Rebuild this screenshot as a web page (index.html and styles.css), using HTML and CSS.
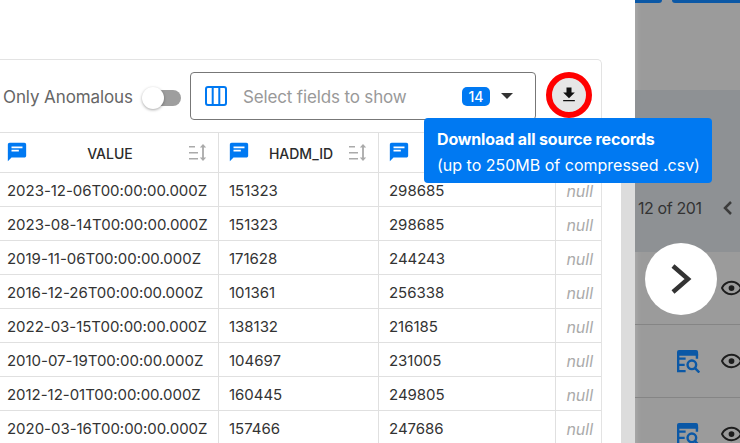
FILE: index.html
```html
<!DOCTYPE html>
<html lang="en">
  <head>
    <meta charset="UTF-8" />
    <meta name="viewport" content="width=device-width, initial-scale=1.0" />
    <title>Source Records</title>
    <link rel="stylesheet" href="styles.css">
  </head>
  <body>
    <svg class="defs" width="0" height="0">
      <symbol id="chat" viewBox="0 0 24 24">
        <path fill-rule="evenodd" d="M20 2H4C2.900 2 2 2.900 2 4v18l4-4h14c1.100 0 2-.9 2-2V4c0-1.100-.9-2-2-2zM6 6h12v2H6zM6 9.500h8v2H6z" />
      </symbol>
      <symbol id="sort" viewBox="0 0 20 18">
        <path d="M1 2h6v1.500H1zM1 8h9v1.500H1zM1 14h9v1.500H1z" />
        <path d="M15 0l3.200 3.500h-2.300v10h2.300L15 17l-3.200-3.500h2.300v-10h-2.300z" />
      </symbol>
      <symbol id="eye" viewBox="0 0 24 24">
        <path d="M12 6c3.790 0 7.170 2.130 8.820 5.500C19.170 14.870 15.790 17 12 17s-7.170-2.130-8.820-5.500C4.830 8.130 8.210 6 12 6m0-2C7 4 2.730 7.110 1 11.500 2.730 15.890 7 19 12 19s9.270-3.110 11-7.500C21.270 7.110 17 4 12 4z" />
        <circle cx="12" cy="11.500" r="3" />
      </symbol>
      <symbol id="eq" viewBox="0 0 24 24">
        <path d="M2 0h18a2 2 0 0 1 2 2v4H0V2a2 2 0 0 1 2-2z" />
        <path class="eq-line" d="M1.200 4v18H9M1.200 9H9M1.200 15.500H8M20.800 4v5M18.800 19l4.500 4.500" />
        <circle class="eq-line" cx="15.500" cy="15.500" r="4.500" />
      </symbol>
    </svg>

    <div class="page">
      <main class="drawer">
        <section class="card">
          <div class="toolbar">
            <span class="toggle-label">Only Anomalous</span>
            <span class="toggle"><span class="toggle-thumb"></span></span>
            <div class="field-select">
              <svg class="columns-icon" width="22" height="20" viewBox="0 0 22 20">
                <rect x="1" y="1" width="20" height="18" rx="2" />
                <path d="M7.700 1v18M14.300 1v18" />
              </svg>
              <span class="field-placeholder">Select fields to show</span>
              <span class="badge">14</span>
              <span class="caret"></span>
            </div>
            <button class="download" type="button">
              <svg width="20" height="20" viewBox="0 0 24 24"><path d="M5 19.500h14V18H5v1.500zM19 9h-4V3H9v6H5l7 7 7-7z" /></svg>
            </button>
          </div>

          <table class="records">
            <thead>
              <tr>
                <th class="col-value">
                  <div class="head">
                    <svg class="chat"><use href="#chat" /></svg>
                    <span class="head-name">VALUE</span>
                    <svg class="sort"><use href="#sort" /></svg>
                  </div>
                </th>
                <th class="col-hadm">
                  <div class="head">
                    <svg class="chat"><use href="#chat" /></svg>
                    <span class="head-name">HADM_ID</span>
                    <svg class="sort"><use href="#sort" /></svg>
                  </div>
                </th>
                <th class="col-third">
                  <div class="head">
                    <svg class="chat"><use href="#chat" /></svg>
                  </div>
                </th>
                <th class="col-null"></th>
              </tr>
            </thead>
            <tbody>
              <tr><td>2023-12-06T00:00:00.000Z</td><td>151323</td><td>298685</td><td class="null">null</td></tr>
              <tr><td>2023-08-14T00:00:00.000Z</td><td>151323</td><td>298685</td><td class="null">null</td></tr>
              <tr><td>2019-11-06T00:00:00.000Z</td><td>171628</td><td>244243</td><td class="null">null</td></tr>
              <tr><td>2016-12-26T00:00:00.000Z</td><td>101361</td><td>256338</td><td class="null">null</td></tr>
              <tr><td>2022-03-15T00:00:00.000Z</td><td>138132</td><td>216185</td><td class="null">null</td></tr>
              <tr><td>2010-07-19T00:00:00.000Z</td><td>104697</td><td>231005</td><td class="null">null</td></tr>
              <tr><td>2012-12-01T00:00:00.000Z</td><td>160445</td><td>249805</td><td class="null">null</td></tr>
              <tr><td>2020-03-16T00:00:00.000Z</td><td>157466</td><td>247686</td><td class="null">null</td></tr>
            </tbody>
          </table>
        </section>

        <div class="gutter"></div>

        <div class="tooltip">
          <strong>Download all source records</strong>
          <span>(up to 250MB of compressed .csv)</span>
        </div>
      </main>

      <aside class="backdrop">
        <div class="top-buttons">
          <span class="top-btn short"></span>
          <span class="top-btn long"></span>
        </div>
        <div class="pager-band">
          <span class="pager-text">12 of 201</span>
          <svg class="pager-prev" width="12" height="16" viewBox="0 0 12 16"><path d="M9 2L3 8l6 6" /></svg>
        </div>
        <div class="side-row">
          <svg class="eq"><use href="#eq" /></svg>
          <svg class="eye"><use href="#eye" /></svg>
        </div>
        <div class="side-row">
          <svg class="eq"><use href="#eq" /></svg>
          <svg class="eye"><use href="#eye" /></svg>
        </div>
        <div class="side-row">
          <svg class="eq"><use href="#eq" /></svg>
          <svg class="eye"><use href="#eye" /></svg>
        </div>
      </aside>

      <button class="next" type="button">
        <svg width="30" height="40" viewBox="0 0 30 40"><path d="M7 7l15 13L7 33" /></svg>
      </button>
    </div>
  </body>
</html>
```

FILE: styles.css
```css
body {
  font-family: Inter, "Open Sans", sans-serif;
  background-color: #fff;
  color: #333;
  margin: 0;
  padding: 0;
}

.defs {
  position: absolute;
}

.page {
  position: relative;
  display: flex;
  width: 740px;
  height: 443px;
  overflow: hidden;
}

/* Left drawer */
.drawer {
  position: relative;
  display: flex;
  width: 635px;
  flex: none;
  padding-top: 59px;
  box-sizing: border-box;
}

.card {
  width: 603px;
  height: 400px;
  flex: none;
  margin-left: -1px;
  box-sizing: border-box;
  border: 1px solid #e3e3e3;
  border-bottom: none;
  border-radius: 0 5px 0 0;
}

.gutter {
  width: 14px;
  height: 260px;
  flex: none;
  margin: 124px 0 0 19px;
  background-color: #dcdcdc;
}

.toolbar {
  display: flex;
  align-items: center;
  height: 72px;
  padding-left: 3px;
}

.toggle-label {
  width: 140px;
  flex: none;
  padding-top: 2px;
  font-size: 17px;
  color: #666;
  letter-spacing: -0.1px;
}

.toggle {
  position: relative;
  width: 38px;
  height: 16px;
  flex: none;
  margin-top: 3px;
  border-radius: 8px;
  background-color: #9e9e9e;
}

.toggle-thumb {
  position: absolute;
  left: -1px;
  top: -3px;
  width: 22px;
  height: 22px;
  border-radius: 50%;
  background-color: #fff;
  box-shadow: 0 1px 3px rgba(0, 0, 0, 0.35);
}

.field-select {
  display: flex;
  align-items: center;
  width: 346px;
  height: 48px;
  flex: none;
  margin-left: 9px;
  box-sizing: border-box;
  padding: 0 22px 0 14px;
  border: 1px solid #777;
  border-radius: 4px;
}

.columns-icon {
  flex: none;
  fill: none;
  stroke: #0079f2;
  stroke-width: 2;
}

.field-placeholder {
  flex: 1;
  margin-left: 16px;
  padding-top: 1px;
  font-size: 17px;
  color: #999;
  letter-spacing: -0.15px;
}

.badge {
  width: 28px;
  height: 19px;
  margin-left: -1px;
  line-height: 19px;
  text-align: center;
  border-radius: 5px;
  background-color: #0079f2;
  color: #fff;
  font-size: 14px;
  font-weight: 500;
}

.caret {
  margin-left: 11px;
  border-left: 6.500px solid transparent;
  border-right: 6.500px solid transparent;
  border-top: 6.500px solid #333;
}

.download {
  display: flex;
  align-items: center;
  justify-content: center;
  width: 46px;
  height: 46px;
  flex: none;
  margin: -3px 0 0 10px;
  padding: 0;
  box-sizing: border-box;
  border: 6px solid #f00;
  border-radius: 50%;
  background-color: #e6e6e6;
  color: #111;
}

.download svg {
  flex: none;
  fill: #111;
}

/* Table */
.records {
  width: 601px;
  table-layout: fixed;
  border-collapse: collapse;
  font-size: 15px;
}

.col-value {
  width: 218px;
}

.col-hadm {
  width: 159px;
}

.col-third {
  width: 176px;
}

.records th,
.records td {
  padding: 0;
  border: 1px solid #e0e0e0;
}

.records tr > :first-child {
  border-left: none;
}

.records tr > :last-child {
  border-right: none;
}

.records thead tr {
  height: 40px;
}

.records tbody tr {
  height: 34px;
}

.records td {
  padding: 2px 0 0 10px;
  color: #333;
  letter-spacing: -0.03px;
}

.records td:first-child {
  padding-left: 7px;
}

.records .null {
  padding: 2px 8px 0 0;
  text-align: right;
  font-size: 16px;
  font-style: italic;
  color: #aaa;
}

.head {
  display: flex;
  align-items: center;
  padding: 0 10px 0 9px;
}

.col-value .head {
  padding-left: 6px;
}

.chat {
  width: 22px;
  height: 22px;
  flex: none;
  margin-top: -2px;
  fill: #0079f2;
}

.head-name {
  flex: 1;
  padding: 2px 0 0 4px;
  text-align: center;
  font-size: 14px;
  font-weight: 500;
  color: #2b2b2b;
}

.sort {
  width: 20px;
  height: 18px;
  flex: none;
  fill: #aaa;
}

.tooltip {
  position: absolute;
  left: 424px;
  top: 118px;
  display: flex;
  flex-direction: column;
  justify-content: center;
  gap: 6px;
  width: 288px;
  height: 65px;
  box-sizing: border-box;
  padding: 2px 0 0 13px;
  border-radius: 4px;
  background-color: #0079f2;
  color: #fff;
  font-size: 16px;
  z-index: 2;
}

.tooltip strong {
  font-weight: 700;
  letter-spacing: -0.15px;
}

/* Dimmed page behind the drawer */
.backdrop {
  width: 140px;
  flex: none;
  background-color: #9b9b9b;
  box-shadow: inset 5px 0 5px -3px rgba(255, 255, 255, 0.15);
}

.top-buttons {
  display: flex;
  gap: 10px;
  height: 90px;
}

.top-btn {
  height: 3px;
  border-radius: 0 0 4px 4px;
  background-color: #0b58a6;
}

.top-btn.short {
  width: 27px;
  border-radius: 0 0 4px 0;
}

.top-btn.long {
  flex: 1;
}

.pager-band {
  display: flex;
  align-items: flex-end;
  height: 162px;
  padding: 0 0 34px 3px;
  box-sizing: border-box;
  background-color: #8e9194;
}

.pager-text {
  width: 84px;
  font-size: 16px;
  color: #333;
  letter-spacing: -0.4px;
}

.pager-prev {
  margin-bottom: 2px;
  fill: none;
  stroke: #3c3c3c;
  stroke-width: 2.500;
}

.side-row {
  display: flex;
  align-items: center;
  height: 73px;
  box-sizing: border-box;
  padding-left: 42px;
  border-bottom: 1px solid #858585;
}

.eq {
  width: 23px;
  height: 23px;
  flex: none;
  fill: #0b58a6;
}

.eq-line {
  fill: none;
  stroke: #0b58a6;
  stroke-width: 2.500;
}

.eye {
  width: 23px;
  height: 23px;
  flex: none;
  margin-left: 20px;
  fill: #1d1d1d;
}

.next {
  position: absolute;
  left: 645px;
  top: 243px;
  display: flex;
  align-items: center;
  justify-content: center;
  width: 72px;
  height: 72px;
  padding: 0;
  border: none;
  border-radius: 50%;
  background-color: #fff;
}

.next svg {
  fill: none;
  stroke: #333;
  stroke-width: 4.500;
}
```
